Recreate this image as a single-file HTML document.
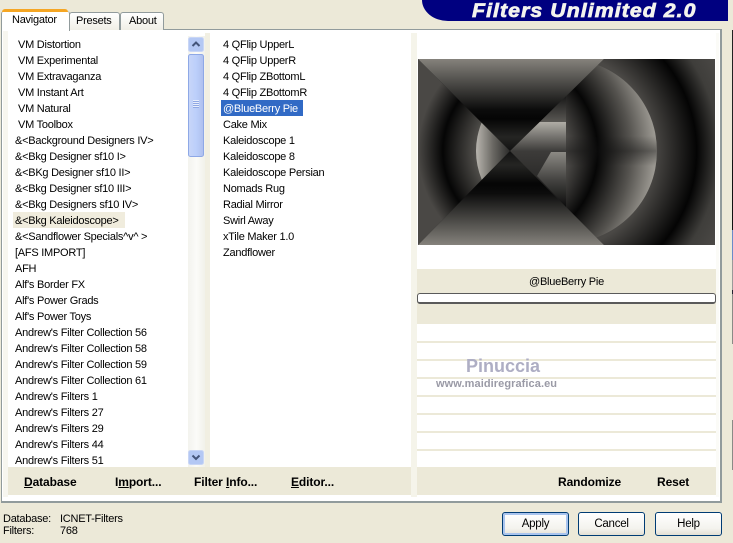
<!DOCTYPE html>
<html><head><meta charset="utf-8"><style>
html,body{margin:0;padding:0}
body{width:733px;height:543px;background:#ece9d8;position:relative;overflow:hidden;font-family:"Liberation Sans",sans-serif;font-size:11px;letter-spacing:-.25px;color:#000}
.a{position:absolute}
.t{position:absolute;white-space:nowrap;line-height:14px}
.list div{height:16px;line-height:16px;white-space:nowrap}
.b{font-weight:bold;font-size:12px;letter-spacing:-.1px;position:absolute;white-space:nowrap;line-height:14px}
.btn{position:absolute;top:512px;width:65px;height:22px;border:1px solid #003c74;border-radius:3px;background:linear-gradient(#fff,#f4f3ee 70%,#e3e0d4);text-align:center;line-height:23px;font-size:11.5px}
.ln{position:absolute;left:417px;width:299px;height:2px;background:#ece9d8}
</style></head><body>
<!-- right edge artifact -->
<div class="a" style="left:732px;top:30px;width:1px;height:130px;background:#222"></div>
<div class="a" style="left:732px;top:160px;width:1px;height:70px;background:#111"></div>
<div class="a" style="left:732px;top:230px;width:1px;height:30px;background:#6a8ac8"></div>
<div class="a" style="left:732px;top:260px;width:1px;height:30px;background:#999"></div>
<div class="a" style="left:732px;top:290px;width:1px;height:4px;background:#223"></div>
<div class="a" style="left:732px;top:294px;width:1px;height:50px;background:#8a8a86"></div>
<div class="a" style="left:732px;top:420px;width:1px;height:50px;background:#8a8a86"></div>

<!-- logo -->
<div class="a" style="left:422px;top:0;width:306px;height:21px;background:#000080;border-bottom-left-radius:26px 21px"></div>
<div class="a" style="left:472px;top:1px;height:21px;line-height:21px;color:#f4f4ee;font-weight:bold;font-style:italic;font-size:19px;white-space:nowrap;letter-spacing:.95px;-webkit-text-stroke:.7px #f4f4ee;transform:scaleX(1.12);transform-origin:0 0">Filters Unlimited 2.0</div>

<!-- tab panel -->
<div class="a" style="left:1px;top:29px;width:718px;height:471px;border:1px solid #919b9c;border-right:2px solid #919b9c;border-bottom:2px solid #919b9c;background:#fff"></div>
<!-- tabs -->
<div class="a" style="left:69px;top:12px;width:49px;height:17px;border:1px solid #919b9c;border-bottom:none;border-radius:3px 3px 0 0;background:linear-gradient(#fff,#f0efe6)"></div>
<div class="a" style="left:120px;top:12px;width:42px;height:17px;border:1px solid #919b9c;border-bottom:none;border-radius:3px 3px 0 0;background:linear-gradient(#fff,#f0efe6)"></div>
<div class="a" style="left:1px;top:11px;width:67px;height:20px;border:1px solid #919b9c;border-top:none;border-bottom:none;background:#fff;border-radius:3px 3px 0 0"></div>
<div class="a" style="left:2px;top:9px;width:66px;height:3px;background:#f5a623;border-radius:3px 3px 0 0"></div>
<div class="t" style="left:12px;top:13px">Navigator</div>
<div class="t" style="left:76px;top:14px">Presets</div>
<div class="t" style="left:129px;top:14px">About</div>

<!-- strips -->
<div class="a" style="left:3px;top:31px;width:5px;height:466px;background:#f7f6ef"></div>
<div class="a" style="left:205px;top:33px;width:5px;height:434px;background:#f1efe2"></div>
<div class="a" style="left:411px;top:33px;width:6px;height:464px;background:#f5f4ea"></div>
<div class="a" style="left:716px;top:33px;width:3px;height:464px;background:#fbfbf7"></div>

<!-- highlights -->
<div class="a" style="left:13px;top:212px;width:112px;height:16px;background:#f0ecdd"></div>
<div class="a" style="left:221px;top:100px;width:82px;height:16px;background:#316ac5"></div>

<!-- left list -->
<div class="a list" style="left:15px;top:37px;width:172px;height:430px;overflow:hidden">
<div style="padding-left:3px">VM Distortion</div>
<div style="padding-left:3px">VM Experimental</div>
<div style="padding-left:3px">VM Extravaganza</div>
<div style="padding-left:3px">VM Instant Art</div>
<div style="padding-left:3px">VM Natural</div>
<div style="padding-left:3px">VM Toolbox</div>
<div>&amp;&lt;Background Designers IV&gt;</div>
<div>&amp;&lt;Bkg Designer sf10 I&gt;</div>
<div>&amp;&lt;BKg Designer sf10 II&gt;</div>
<div>&amp;&lt;Bkg Designer sf10 III&gt;</div>
<div>&amp;&lt;Bkg Designers sf10 IV&gt;</div>
<div>&amp;&lt;Bkg Kaleidoscope&gt;</div>
<div>&amp;&lt;Sandflower Specials^v^ &gt;</div>
<div>[AFS IMPORT]</div>
<div>AFH</div>
<div>Alf's Border FX</div>
<div>Alf's Power Grads</div>
<div>Alf's Power Toys</div>
<div>Andrew's Filter Collection 56</div>
<div>Andrew's Filter Collection 58</div>
<div>Andrew's Filter Collection 59</div>
<div>Andrew's Filter Collection 61</div>
<div>Andrew's Filters 1</div>
<div>Andrew's Filters 27</div>
<div>Andrew's Filters 29</div>
<div>Andrew's Filters 44</div>
<div>Andrew's Filters 51</div>
</div>

<!-- middle list -->
<div class="a list" style="left:223px;top:37px;width:180px">
<div>4 QFlip UpperL</div>
<div>4 QFlip UpperR</div>
<div>4 QFlip ZBottomL</div>
<div>4 QFlip ZBottomR</div>
<div style="color:#fff">@BlueBerry Pie</div>
<div>Cake Mix</div>
<div>Kaleidoscope 1</div>
<div>Kaleidoscope 8</div>
<div>Kaleidoscope Persian</div>
<div>Nomads Rug</div>
<div>Radial Mirror</div>
<div>Swirl Away</div>
<div>xTile Maker 1.0</div>
<div>Zandflower</div>
</div>

<!-- scrollbar -->
<svg class="a" style="left:188px;top:36px" width="17" height="431" viewBox="0 0 17 431">
<defs>
<linearGradient id="tr" x1="0" x2="1" y1="0" y2="0"><stop offset="0" stop-color="#f3f3ee"/><stop offset=".5" stop-color="#fbfbf8"/><stop offset="1" stop-color="#f1f1ea"/></linearGradient>
<linearGradient id="th" x1="0" x2="1" y1="0" y2="0"><stop offset="0" stop-color="#c8d6f8"/><stop offset=".5" stop-color="#bccffa"/><stop offset="1" stop-color="#aebfee"/></linearGradient>
</defs>
<rect width="17" height="431" fill="url(#tr)"/>
<rect x=".5" y="1.5" width="15" height="14" rx="2" fill="#b4c8f4" stroke="#c9d6f5"/>
<path d="M4.5 10 L8 6.5 L11.5 10" fill="none" stroke="#44557a" stroke-width="2"/>
<rect x=".5" y="18.5" width="15" height="102" rx="2" fill="url(#th)" stroke="#8ea8e6"/>
<path d="M5 64.5h6M5 66.5h6M5 68.5h6M5 70.5h6" stroke="#e8eefc" stroke-width="1"/>
<path d="M5 65.5h6M5 67.5h6M5 69.5h6M5 71.5h6" stroke="#90a8e4" stroke-width="1"/>
<rect x=".5" y="414.5" width="15" height="14" rx="2" fill="#b4c8f4" stroke="#c9d6f5"/>
<path d="M4.5 419.5 L8 423 L11.5 419.5" fill="none" stroke="#44557a" stroke-width="2"/>
</svg>

<!-- bottom bars -->
<div class="a" style="left:8px;top:467px;width:403px;height:28px;background:#ece9d8"></div>
<div class="a" style="left:417px;top:467px;width:299px;height:28px;background:#ece9d8"></div>
<div class="b" style="left:24px;top:475px;"><u>D</u>atabase</div>
<div class="b" style="left:115px;top:475px;">I<u>m</u>port...</div>
<div class="b" style="left:194px;top:475px;">Filter <u>I</u>nfo...</div>
<div class="b" style="left:291px;top:475px;"><u>E</u>ditor...</div>
<div class="b" style="left:558px;top:475px;">Randomize</div>
<div class="b" style="left:657px;top:475px;">Reset</div>

<!-- preview -->
<svg class="a" style="left:418px;top:59px" width="297" height="186" viewBox="418 59 297 186">
<defs>
<linearGradient id="gT" gradientUnits="userSpaceOnUse" x1="0" y1="59" x2="0" y2="151"><stop offset="0" stop-color="#85827c"/><stop offset=".3" stop-color="#43423f"/><stop offset=".55" stop-color="#0c0c0c"/><stop offset=".65" stop-color="#050505"/><stop offset=".85" stop-color="#252523"/><stop offset="1" stop-color="#111"/></linearGradient>
<linearGradient id="gB" gradientUnits="userSpaceOnUse" x1="0" y1="245" x2="0" y2="151"><stop offset="0" stop-color="#85827c"/><stop offset=".3" stop-color="#43423f"/><stop offset=".55" stop-color="#0c0c0c"/><stop offset=".65" stop-color="#050505"/><stop offset=".85" stop-color="#252523"/><stop offset="1" stop-color="#111"/></linearGradient>
<radialGradient id="gL" gradientUnits="userSpaceOnUse" cx="530" cy="151" r="130"><stop offset=".4" stop-color="#55534f"/><stop offset=".67" stop-color="#050505"/><stop offset=".86" stop-color="#4a4845"/><stop offset="1" stop-color="#4a4845"/></radialGradient>
<linearGradient id="gLc" gradientUnits="userSpaceOnUse" x1="476" y1="0" x2="510" y2="0"><stop offset="0" stop-color="#b8b5ae"/><stop offset=".5" stop-color="#6a6863"/><stop offset="1" stop-color="#2a2a29"/></linearGradient>
<radialGradient id="gR" gradientUnits="userSpaceOnUse" cx="555" cy="151" r="184"><stop offset=".54" stop-color="#4a4845"/><stop offset=".77" stop-color="#040404"/><stop offset=".89" stop-color="#3f3e3b"/><stop offset="1" stop-color="#4a4845"/></radialGradient>
<radialGradient id="gI" gradientUnits="userSpaceOnUse" cx="501" cy="151" r="156"><stop offset=".42" stop-color="#4f4d4a"/><stop offset=".62" stop-color="#060606"/><stop offset=".83" stop-color="#55534f"/><stop offset="1" stop-color="#a09d96"/></radialGradient>
<linearGradient id="gS" gradientUnits="userSpaceOnUse" x1="0" y1="136" x2="0" y2="166"><stop offset="0" stop-color="#111" stop-opacity="0"/><stop offset=".5" stop-color="#111" stop-opacity=".4"/><stop offset="1" stop-color="#111" stop-opacity="0"/></linearGradient>
<linearGradient id="gU" gradientUnits="userSpaceOnUse" x1="0" y1="122" x2="0" y2="151"><stop offset="0" stop-color="#b0ada6"/><stop offset="1" stop-color="#3d3c3a"/></linearGradient>
<linearGradient id="gU2" gradientUnits="userSpaceOnUse" x1="0" y1="93" x2="0" y2="122"><stop offset="0" stop-color="#111"/><stop offset="1" stop-color="#5a5854"/></linearGradient>
<linearGradient id="gD" gradientUnits="userSpaceOnUse" x1="0" y1="152" x2="0" y2="207"><stop offset="0" stop-color="#3c3b39"/><stop offset=".5" stop-color="#2a2928"/><stop offset="1" stop-color="#0a0a0a"/></linearGradient>
<linearGradient id="gD2" gradientUnits="userSpaceOnUse" x1="0" y1="152" x2="0" y2="207"><stop offset="0" stop-color="#8c8a84"/><stop offset=".5" stop-color="#454442"/><stop offset="1" stop-color="#0c0c0c"/></linearGradient>
<clipPath id="cR"><polygon points="510,151 604,59 715,59 715,245 604,245"/></clipPath>
<clipPath id="cL"><polygon points="418,59 510,151 418,245"/></clipPath>
</defs>
<rect x="418" y="59" width="297" height="186" fill="#111"/>
<g clip-path="url(#cR)">
<rect x="500" y="59" width="215" height="186" fill="url(#gR)"/>
<circle cx="565" cy="151" r="92" fill="url(#gI)"/>
<rect x="566" y="136" width="91" height="30" fill="url(#gS)"/>
</g>
<polygon points="510,151 566,96 566,122 539,122" fill="url(#gU2)"/>
<polygon points="510,151 539,122 566,122 566,151" fill="url(#gU)"/>
<polygon points="510,151 566,151 566,207" fill="url(#gD)"/>
<polygon points="551,152 566,152 566,207 537,176" fill="url(#gD2)"/>
<g clip-path="url(#cL)">
<rect x="418" y="59" width="92" height="186" fill="url(#gL)"/>
<circle cx="550" cy="151" r="74" fill="url(#gLc)"/>
</g>
<polygon points="418,59 604,59 510,151" fill="url(#gT)"/>
<polygon points="418,245 604,245 510,151" fill="url(#gB)"/>
</svg>

<!-- info block -->
<div class="a" style="left:417px;top:269px;width:299px;height:55px;background:#ece9d8"></div>
<div class="t" style="left:417px;width:299px;top:275px;text-align:center">@BlueBerry Pie</div>
<div class="a" style="left:417px;top:293px;width:297px;height:8px;border:1px solid #5a5a5a;border-width:1px 1px 2px 1px;border-radius:3px;background:#fff"></div>
<div class="ln" style="top:341px"></div>
<div class="ln" style="top:359px"></div>
<div class="ln" style="top:377px"></div>
<div class="ln" style="top:395px"></div>
<div class="ln" style="top:413px"></div>
<div class="ln" style="top:431px"></div>
<div class="ln" style="top:449px"></div>

<!-- watermark -->
<div class="t" style="left:466px;top:356px;line-height:20px;font-size:18px;color:#aeaec4;letter-spacing:0;font-weight:bold">Pinuccia</div>
<div class="t" style="left:436px;top:377px;font-size:11px;color:#9a9aa6;letter-spacing:.08px;font-weight:bold">www.maidiregrafica.eu</div>

<!-- status -->
<div class="t" style="left:3px;top:512px">Database:</div>
<div class="t" style="left:60px;top:512px">ICNET-Filters</div>
<div class="t" style="left:3px;top:524px">Filters:</div>
<div class="t" style="left:60px;top:524px">768</div>

<!-- buttons -->
<div class="btn" style="left:502px;box-shadow:inset 0 0 0 2px #a9c4ee">Apply</div>
<div class="btn" style="left:578px">Cancel</div>
<div class="btn" style="left:655px">Help</div>
</body></html>
